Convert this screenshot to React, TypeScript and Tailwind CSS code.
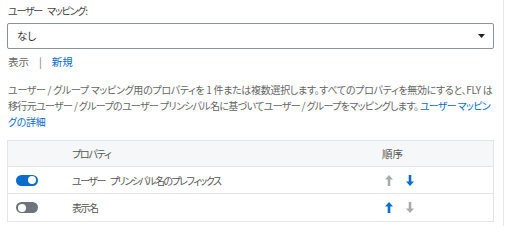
import React from 'react';

const font = {
  fontFamily: '"Noto Sans CJK JP", "Liberation Sans", sans-serif',
  fontFeatureSettings: '"palt"',
};

function Toggle({ on }: { on: boolean }) {
  return (
    <span
      className={`relative inline-block w-[22px] h-[11px] rounded-full ${on ? 'bg-[#0a6ccc]' : 'bg-[#6f747a]'}`}
    >
      <span
        className={`absolute top-[1.5px] w-[8px] h-[8px] rounded-full bg-white ${on ? 'right-[2px]' : 'left-[2px]'}`}
      />
    </span>
  );
}

function Arrow({ dir, active }: { dir: 'up' | 'down'; active: boolean }) {
  const color = active ? '#0a6ccc' : '#a8abaf';
  return (
    <svg width="8" height="11" viewBox="0 0 8 11" className="block">
      {dir === 'up' ? (
        <path d="M4 0 L8 4.5 H5.3 V11 H2.7 V4.5 H0 Z" fill={color} />
      ) : (
        <path d="M4 11 L8 6.5 H5.3 V0 H2.7 V6.5 H0 Z" fill={color} />
      )}
    </svg>
  );
}

const rows = [
  { on: true, name: ['ユーザー', 'プリンシパル名のプレフィックス'], up: false, down: true },
  { on: false, name: ['表示名'], up: true, down: false },
];

export default function App() {
  return (
    <div className="w-[506px] h-[226px] bg-white flex text-[10.5px] text-[#555]" style={font}>
      <div className="w-[503px] pl-[7px] pr-[9px] pt-[3px]">
        {/* Label */}
        <div className="text-[#444] text-[10px] leading-[16px] tracking-[-1.2px] pl-[1px]">
          ユーザー<span className="inline-block w-[5px]" />マッピング:
        </div>

        {/* Select */}
        <div className="mt-[4px] h-[26px] border border-[#8d9297] rounded-[2px] flex items-center justify-between pl-[9px] pr-[8px] text-[#333]">
          <span>なし</span>
          <svg width="7" height="4" viewBox="0 0 7 4">
            <path d="M0 0 H7 L3.5 4 Z" fill="#222" />
          </svg>
        </div>

        {/* Links */}
        <div className="mt-[5px] flex items-center leading-[16px] pl-[1px]">
          <span className="text-[#666]">表示</span>
          <span className="mx-[10px] text-[#777]">|</span>
          <span className="text-[#0a6ccc]">新規</span>
        </div>

        {/* Description */}
        <p className="mt-[12px] text-[10px] leading-[16px] pl-[1px] text-[#666] whitespace-nowrap">
          <span className="tracking-[-0.3px]">
            ユーザー / グループ マッピング用のプロパティを 1 件または複数選択します。すべてのプロパティを無効にすると、FLY は
          </span>
          <br />
          <span className="tracking-[-0.65px]">
            移行元ユーザー / グループのユーザー プリンシパル名に基づいてユーザー / グループをマッピングします。{' '}
            <span className="text-[#0a6ccc]">ユーザー マッピン</span>
          </span>
          <br />
          <span className="text-[#0a6ccc] tracking-[-0.3px]">グの詳細</span>
        </p>

        {/* Table */}
        <div className="mt-[10px] border border-[#e3e4e6]">
          <div className="h-[26px] bg-[#f6f7f8] flex items-center border-b border-[#e3e4e6] text-[#555]">
            <div className="w-[64px]" />
            <div className="flex-1 text-[10px] tracking-[-1.2px]">プロパティ</div>
            <div className="w-[122px] pl-[11px]">順序</div>
          </div>
          {rows.map((r, i) => (
            <div
              key={i}
              className={`h-[27px] flex items-center ${i === 0 ? 'border-b border-[#e3e4e6]' : ''}`}
            >
              <div className="w-[64px] pl-[8px] flex items-center">
                <Toggle on={r.on} />
              </div>
              <div className="flex-1 text-[#555] text-[10px] tracking-[-1.5px]">
                {r.name.map((part, j) => (
                  <React.Fragment key={j}>
                    {j > 0 && <span className="inline-block w-[5px]" />}
                    {part}
                  </React.Fragment>
                ))}
              </div>
              <div className="w-[122px] pl-[14px] flex items-center gap-[13px]">
                <Arrow dir="up" active={r.up} />
                <Arrow dir="down" active={r.down} />
              </div>
            </div>
          ))}
        </div>
      </div>
      <div className="w-px h-full bg-[#e6e7e8]" />
    </div>
  );
}
